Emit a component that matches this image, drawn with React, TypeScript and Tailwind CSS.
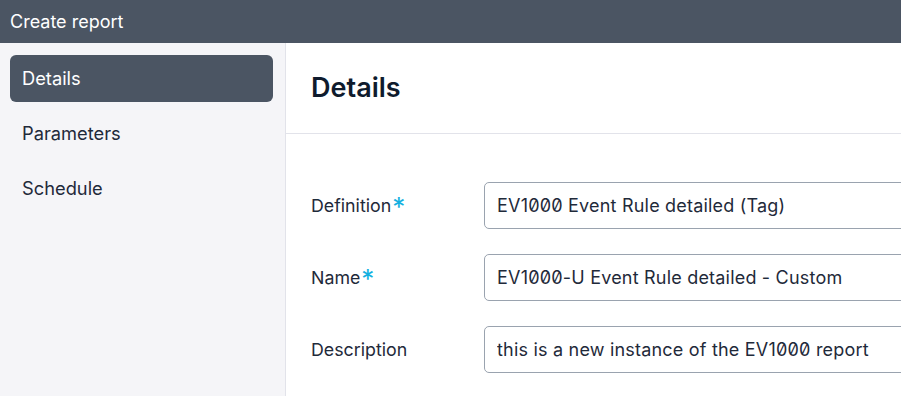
import React from "react";

interface FieldProps {
    label: string;
    value: string;
    required?: boolean;
}

const Field: React.FC<FieldProps> = ({ label, value, required }) => (
    <div className="flex items-center h-[47px]">
        <label className="w-[173px] shrink-0 text-[17.8px] text-[#1f2a3a] pt-[1px]">
            {label}
            {required && <span className="text-[#12b0e0] text-[26px] leading-none ml-[1px] align-[-4px]">*</span>}
        </label>
        <input
            type="text"
            defaultValue={value}
            className="w-[460px] shrink-0 h-[47px] px-[12px] rounded-[5px] border border-[#9aa3af] bg-white text-[18px] tracking-[0.2px] text-[#1f2a3a] outline-none"
            style={{ fontFeatureSettings: "'zero'" }}
        />
    </div>
);

export default function App() {
    const menu = ["Details", "Parameters", "Schedule"];

    return (
        <div className="w-[901px] h-[396px] overflow-hidden flex flex-col bg-white" style={{ fontFamily: "Inter, 'Noto Sans', sans-serif" }}>
            {/* Barra superior */}
            <div className="h-[43px] shrink-0 bg-[#4b5563] flex items-center px-[10px]">
                <span className="text-white text-[18px]">Create report</span>
            </div>

            <div className="flex flex-1 min-h-0">
                {/* Menu lateral */}
                <nav className="w-[286px] shrink-0 bg-[#f5f5f8] border-r border-[#e2e3ea] pt-[12px] pl-[10px] pr-[12px] flex flex-col gap-[8px]">
                    {menu.map((item, i) => (
                        <div
                            key={item}
                            className={`h-[47px] flex items-center px-[12px] rounded-[6px] text-[18.3px] ${i === 0 ? "bg-[#4b5563] text-white" : "text-[#1f2a3a]"}`}
                        >
                            {item}
                        </div>
                    ))}
                </nav>

                {/* Contenido */}
                <div className="flex-1 min-w-0 overflow-hidden">
                    <div className="h-[91px] border-b border-[#e2e3ea] flex items-center px-[25px]">
                        <h2 className="text-[27px] font-semibold text-[#0f1b2d]">Details</h2>
                    </div>
                    <div className="pl-[25px] pt-[48px] flex flex-col gap-[25px]">
                        <Field label="Definition" value="EV1000 Event Rule detailed (Tag)" required />
                        <Field label="Name" value="EV1000-U Event Rule detailed - Custom" required />
                        <Field label="Description" value="this is a new instance of the EV1000 report" />
                    </div>
                </div>
            </div>
        </div>
    );
}
